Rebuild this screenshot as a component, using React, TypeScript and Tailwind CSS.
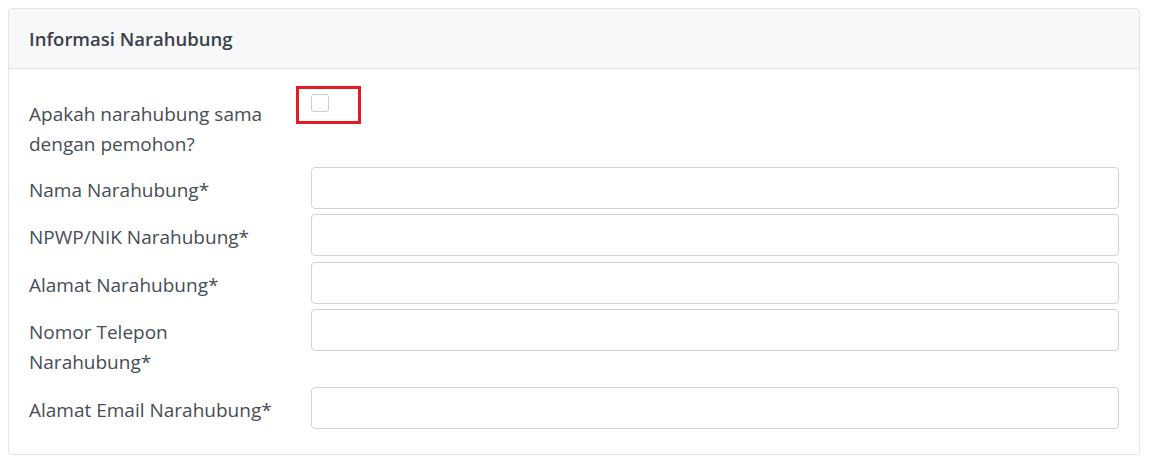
import React from "react";

const rows = [
  { label: ["Nama Narahubung*"] },
  { label: ["NPWP/NIK Narahubung*"] },
  { label: ["Alamat Narahubung*"] },
  { label: ["Nomor Telepon", "Narahubung*"] },
  { label: ["Alamat Email Narahubung*"] },
];

export default function App() {
  return (
    <div className="bg-white pt-2 pl-2 pr-3 font-['Open_Sans',sans-serif]">
      <div className="border border-[#e1e4e8] rounded-[4px] bg-white">
        <div className="h-[60px] flex items-center px-5 bg-[#f7f8fa] border-b border-[#e1e4e8] rounded-t-[4px]">
          <span className="text-[18.5px] font-semibold text-[#3a3f47]">Informasi Narahubung</span>
        </div>
        <div className="pt-[17px] pb-[20px] pl-5 pr-5 text-[19px] text-[#474d56]">
          <div className="flex items-start mb-[5px]">
            <label className="w-[282px] shrink-0 pt-[13px] pb-[3px] leading-[30px]">
              Apakah narahubung sama
              <br />
              dengan pemohon?
            </label>
            <div className="border-[3px] border-[#e31b23] w-[65px] h-[38px] -ml-[15px] pl-[12px] pt-[5px]">
              <input
                type="checkbox"
                className="appearance-none block w-[18px] h-[18px] border border-[#c9ced4] rounded-[3px] bg-white"
              />
            </div>
          </div>
          {rows.map((r, i) => (
            <div key={i} className="flex items-start mb-[5.4px]">
              <label className="w-[282px] shrink-0 pt-[8px] pb-[4px] leading-[30px]">
                {r.label.map((l, j) => (
                  <div key={j}>{l}</div>
                ))}
              </label>
              <input
                type="text"
                className="flex-1 h-[42px] border border-[#ced4da] rounded-[4px] bg-white outline-none px-3"
              />
            </div>
          ))}
        </div>
      </div>
    </div>
  );
}
